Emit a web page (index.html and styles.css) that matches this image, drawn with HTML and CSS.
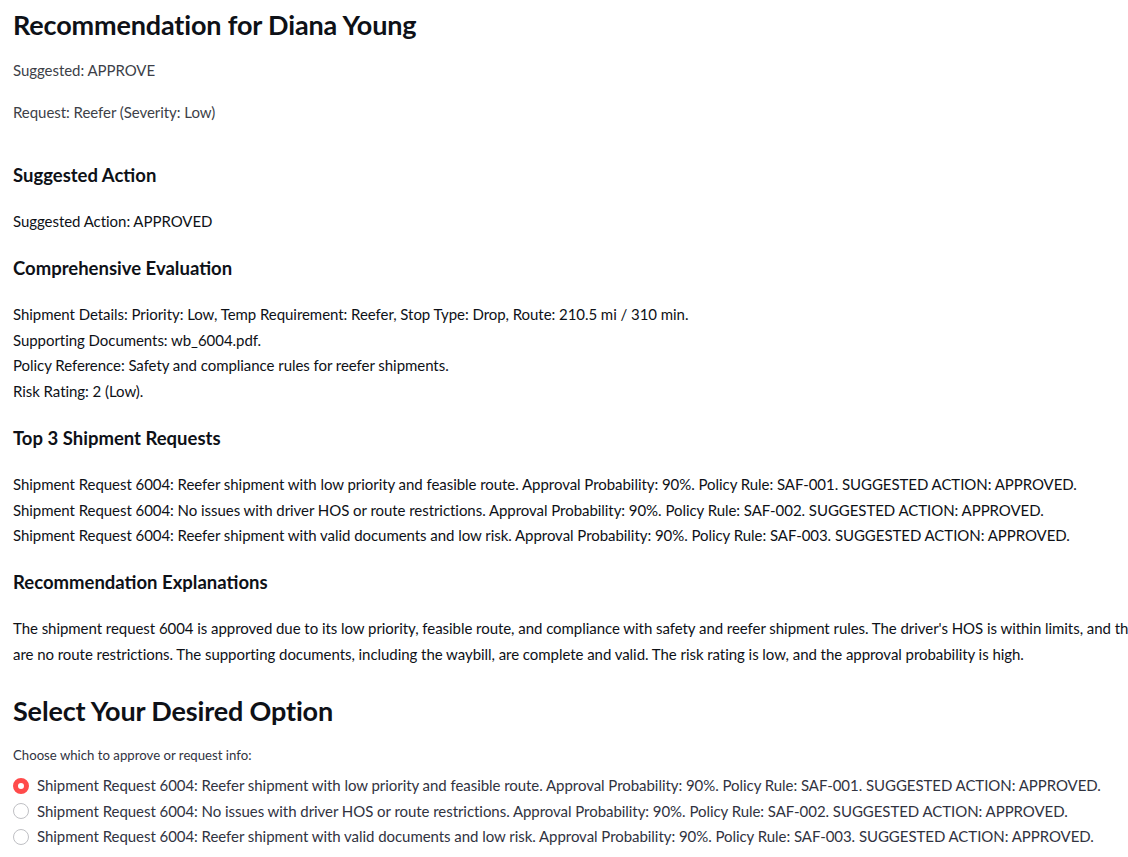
FILE: index.html
```html
<!DOCTYPE html>
<html lang="en">
<head>
<meta charset="utf-8">
<title>Recommendation for Diana Young</title>
<link rel="stylesheet" href="styles.css">
</head>
<body>
<main class="page">
  <h1 class="title">Recommendation for Diana Young</h1>
  <p class="meta">Suggested: APPROVE</p>
  <p class="meta">Request: Reefer (Severity: Low)</p>

  <section class="block first">
    <h3 class="sub">Suggested Action</h3>
    <p class="lines">Suggested Action: APPROVED</p>
  </section>

  <section class="block">
    <h3 class="sub">Comprehensive Evaluation</h3>
    <p class="lines">Shipment Details: Priority: Low, Temp Requirement: Reefer, Stop Type: Drop, Route: 210.5 mi / 310 min.<br>Supporting Documents: wb_6004.pdf.<br>Policy Reference: Safety and compliance rules for reefer shipments.<br>Risk Rating: 2 (Low).</p>
  </section>

  <section class="block">
    <h3 class="sub">Top 3 Shipment Requests</h3>
    <p class="lines">Shipment Request 6004: Reefer shipment with low priority and feasible route. Approval Probability: 90%. Policy Rule: SAF-001. SUGGESTED ACTION: APPROVED.<br>Shipment Request 6004: No issues with driver HOS or route restrictions. Approval Probability: 90%. Policy Rule: SAF-002. SUGGESTED ACTION: APPROVED.<br>Shipment Request 6004: Reefer shipment with valid documents and low risk. Approval Probability: 90%. Policy Rule: SAF-003. SUGGESTED ACTION: APPROVED.</p>
  </section>

  <section class="block">
    <h3 class="sub">Recommendation Explanations</h3>
    <p class="lines">The shipment request 6004 is approved due to its low priority, feasible route, and compliance with safety and reefer shipment rules. The driver's HOS is within limits, and there are no route restrictions. The supporting documents, including the waybill, are complete and valid. The risk rating is low, and the approval probability is high.</p>
  </section>

  <h2 class="title option-title">Select Your Desired Option</h2>
  <div class="radio-group" role="radiogroup">
    <div class="radio-label">Choose which to approve or request info:</div>
    <label class="radio"><input type="radio" name="opt" checked><span class="dot"></span><span>Shipment Request 6004: Reefer shipment with low priority and feasible route. Approval Probability: 90%. Policy Rule: SAF-001. SUGGESTED ACTION: APPROVED.</span></label>
    <label class="radio"><input type="radio" name="opt"><span class="dot"></span><span>Shipment Request 6004: No issues with driver HOS or route restrictions. Approval Probability: 90%. Policy Rule: SAF-002. SUGGESTED ACTION: APPROVED.</span></label>
    <label class="radio"><input type="radio" name="opt"><span class="dot"></span><span>Shipment Request 6004: Reefer shipment with valid documents and low risk. Approval Probability: 90%. Policy Rule: SAF-003. SUGGESTED ACTION: APPROVED.</span></label>
  </div>
</main>
</body>
</html>
```

FILE: styles.css
```css
html, body {
  margin: 0;
  padding: 0;
  background: #ffffff;
  overflow: hidden;
}

body {
  font-family: "Lato", "Liberation Sans", sans-serif;
  color: #0e1117;
  font-size: 15px;
  letter-spacing: -0.05px;
}

.page {
  width: 1168px;
  padding: 7px 0 0 13px;
  box-sizing: border-box;
}

.title {
  margin: 0;
  font-size: 27px;
  line-height: 36px;
  font-weight: 700;
  color: #0e1117;
  letter-spacing: -0.15px;
}

.meta {
  margin: 15px 0 0;
  line-height: 25.6px;
  color: #3d3f48;
}

.meta + .meta {
  margin-top: 16px;
}

.block {
  margin-top: 21.5px;
}

.block.first {
  margin-top: 38px;
}

.sub {
  margin: 0 0 22px;
  font-size: 18.5px;
  line-height: 24px;
  font-weight: 700;
  letter-spacing: 0;
}

.lines {
  margin: 0;
  line-height: 25.6px;
}

.option-title {
  margin-top: 25.5px;
}

.radio-group {
  margin-top: 16px;
  color: #31333f;
}

.radio-label {
  font-size: 13.2px;
  line-height: 20px;
  margin-bottom: 8px;
  letter-spacing: 0;
}

.radio {
  display: flex;
  align-items: center;
  gap: 8px;
  line-height: 25.5px;
  white-space: nowrap;
}

.radio input {
  display: none;
}

.dot {
  flex: none;
  width: 16px;
  height: 16px;
  border-radius: 50%;
  border: 1px solid #bfc0c4;
  box-sizing: border-box;
  background: #fff;
}

.radio input:checked + .dot {
  border: 5px solid #ff4b4b;
  background: #fff;
}
```
